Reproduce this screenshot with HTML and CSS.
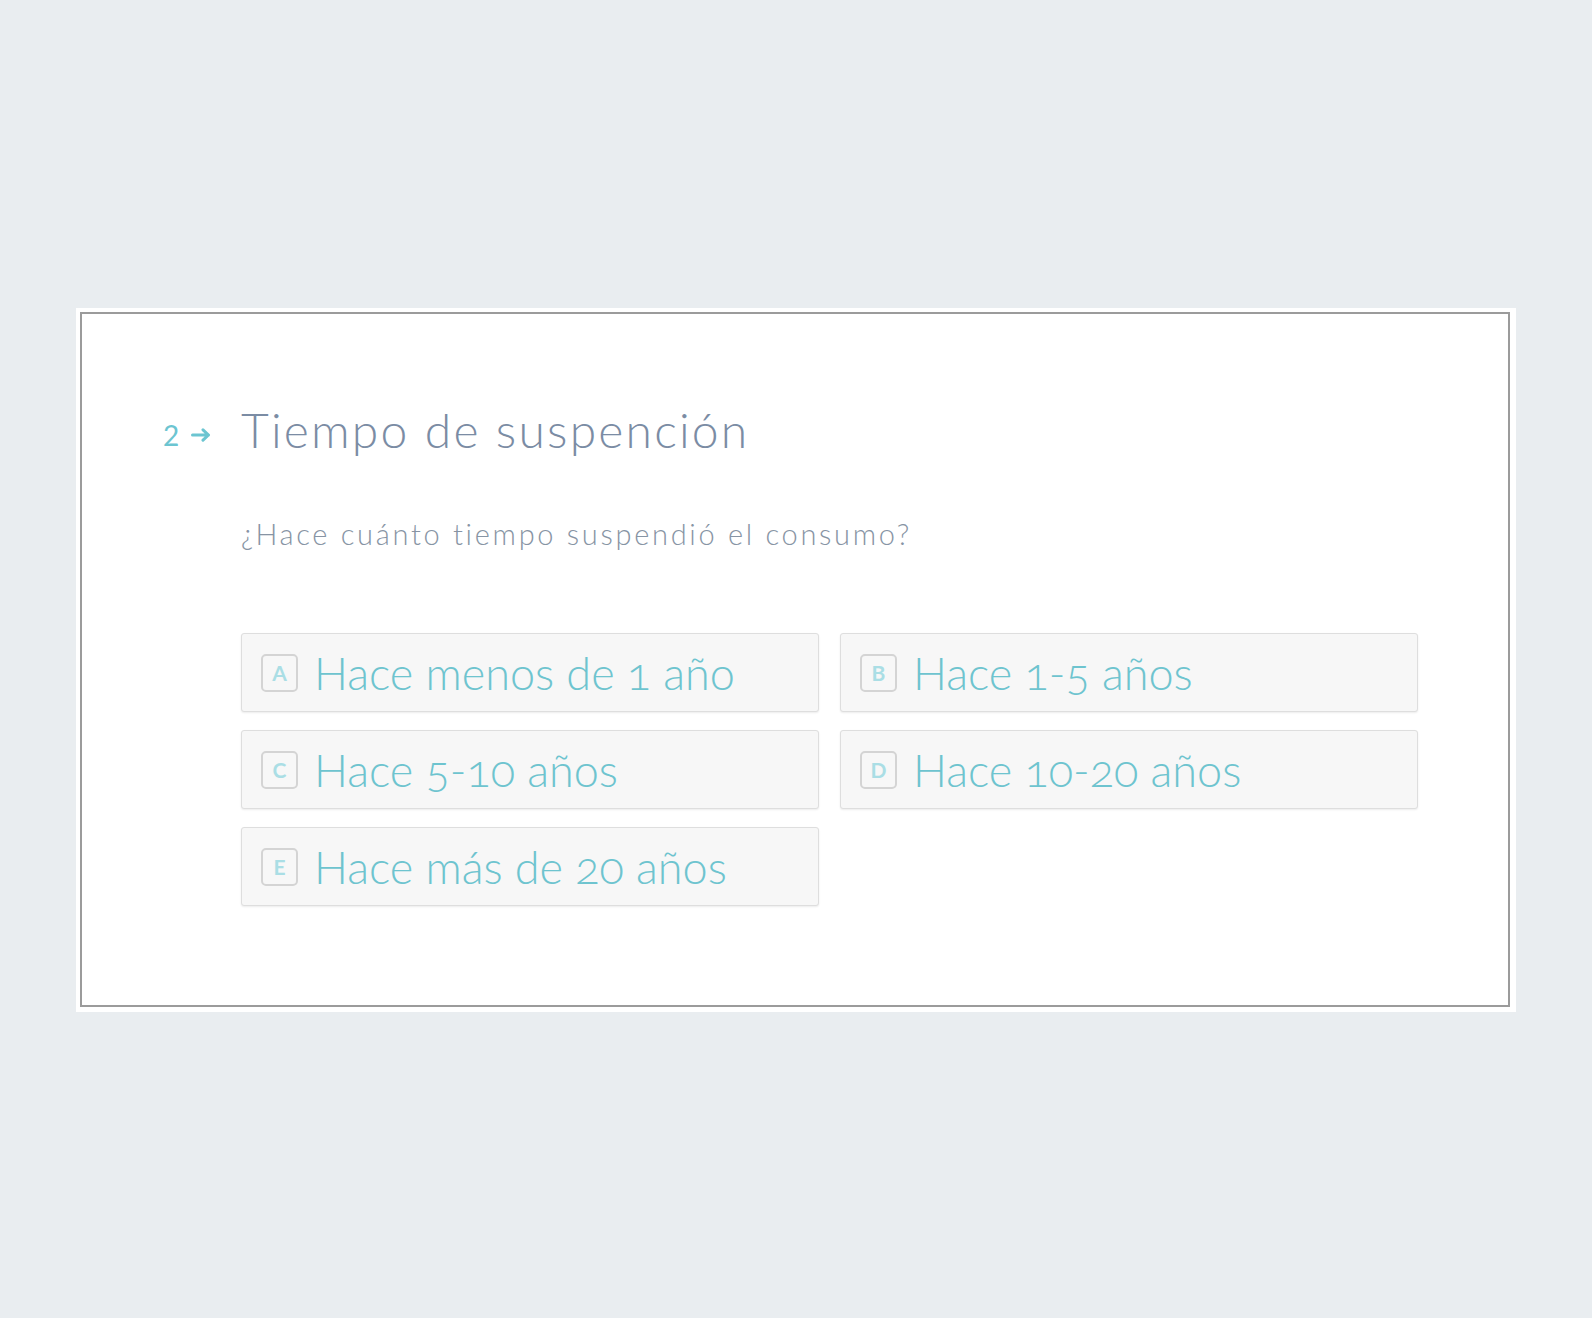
FILE: index.html
```html
<!DOCTYPE html>
<html lang="es">

<head>
    <meta charset="utf-8">
    <title>Tiempo de suspención</title>
    <link rel="stylesheet" href="styles.css">
</head>

<body>
    <!-- white frame round the question card -->
    <div class="frame">
        <div class="card">
            <div class="question">
                <div class="head">
                    <span class="counter">
                        <span class="num">2</span>
                        <svg class="arrow" width="21" height="14" viewBox="0 0 21 14">
                            <path d="M1.5 7h16M12 1.8L17.5 7 12 12.2" fill="none" stroke="#6cc5d1" stroke-width="3" stroke-linecap="round" stroke-linejoin="round" />
                        </svg>
                    </span>
                    <h1 class="title">Tiempo de suspención</h1>
                </div>

                <p class="subtitle">¿Hace cuánto tiempo suspendió el consumo?</p>

                <!-- answer choices -->
                <div class="choices">
                    <div class="choice"><span class="key">A</span><span class="label">Hace menos de 1 año</span></div>
                    <div class="choice"><span class="key">B</span><span class="label">Hace 1-5 años</span></div>
                    <div class="choice"><span class="key">C</span><span class="label">Hace 5-10 años</span></div>
                    <div class="choice"><span class="key">D</span><span class="label">Hace 10-20 años</span></div>
                    <div class="choice"><span class="key">E</span><span class="label">Hace más de 20 años</span></div>
                </div>
            </div>
        </div>
    </div>
</body>

</html>
```

FILE: styles.css
```css
html {
    background-color: #e9edf0;
}

body {
    margin: 0;
    min-height: 1318px;
    padding-top: 308px;
    box-sizing: border-box;
    font-family: Lato, "Open Sans", sans-serif;
    font-variant-numeric: oldstyle-nums;
}

.frame {
    width: 1440px;
    margin-left: 76px;
    padding: 4px 6px 5px 4px;
    box-sizing: border-box;
    background: #ffffff;
}

.card {
    height: 695px;
    border: 2px solid #9b9b9b;
    box-sizing: border-box;
    background: #ffffff;
}

.question {
    padding: 87px 0 0 159px;
}

.head {
    display: flex;
}

.counter {
    display: flex;
    align-items: center;
    align-self: flex-start;
    width: 78px;
    height: 28px;
    margin: 20px 0 0 -78px;
    color: #6cc5d1;
}

.num {
    font-size: 28px;
    line-height: 28px;
    font-weight: 400;
    font-variant-numeric: lining-nums;
}

.arrow {
    margin-left: 12px;
}

.title {
    margin: 0;
    font-size: 48px;
    line-height: 58px;
    font-weight: 300;
    letter-spacing: 2.2px;
    color: #7b8ca4;
}

.subtitle {
    margin: 59px 0 0 0;
    font-size: 29px;
    line-height: 32px;
    font-weight: 300;
    letter-spacing: 2.7px;
    color: #8794a4;
}

.choices {
    display: grid;
    grid-template-columns: 578px 578px;
    column-gap: 21px;
    row-gap: 18px;
    margin-top: 83px;
}

.choice {
    display: flex;
    align-items: center;
    height: 79px;
    padding-left: 19px;
    box-sizing: border-box;
    background: #f7f7f7;
    border: 1px solid #dedede;
    border-radius: 3px;
    box-shadow: 0 1px 2px rgba(0, 0, 0, 0.08);
}

.key {
    display: flex;
    align-items: center;
    justify-content: center;
    width: 37px;
    height: 38px;
    box-sizing: border-box;
    border: 2px solid #d4d4d4;
    border-radius: 5px;
    font-size: 21px;
    font-weight: 700;
    color: #aadee5;
}

.label {
    margin-left: 16px;
    font-size: 45px;
    font-weight: 300;
    color: #6ec4cf;
}
```
